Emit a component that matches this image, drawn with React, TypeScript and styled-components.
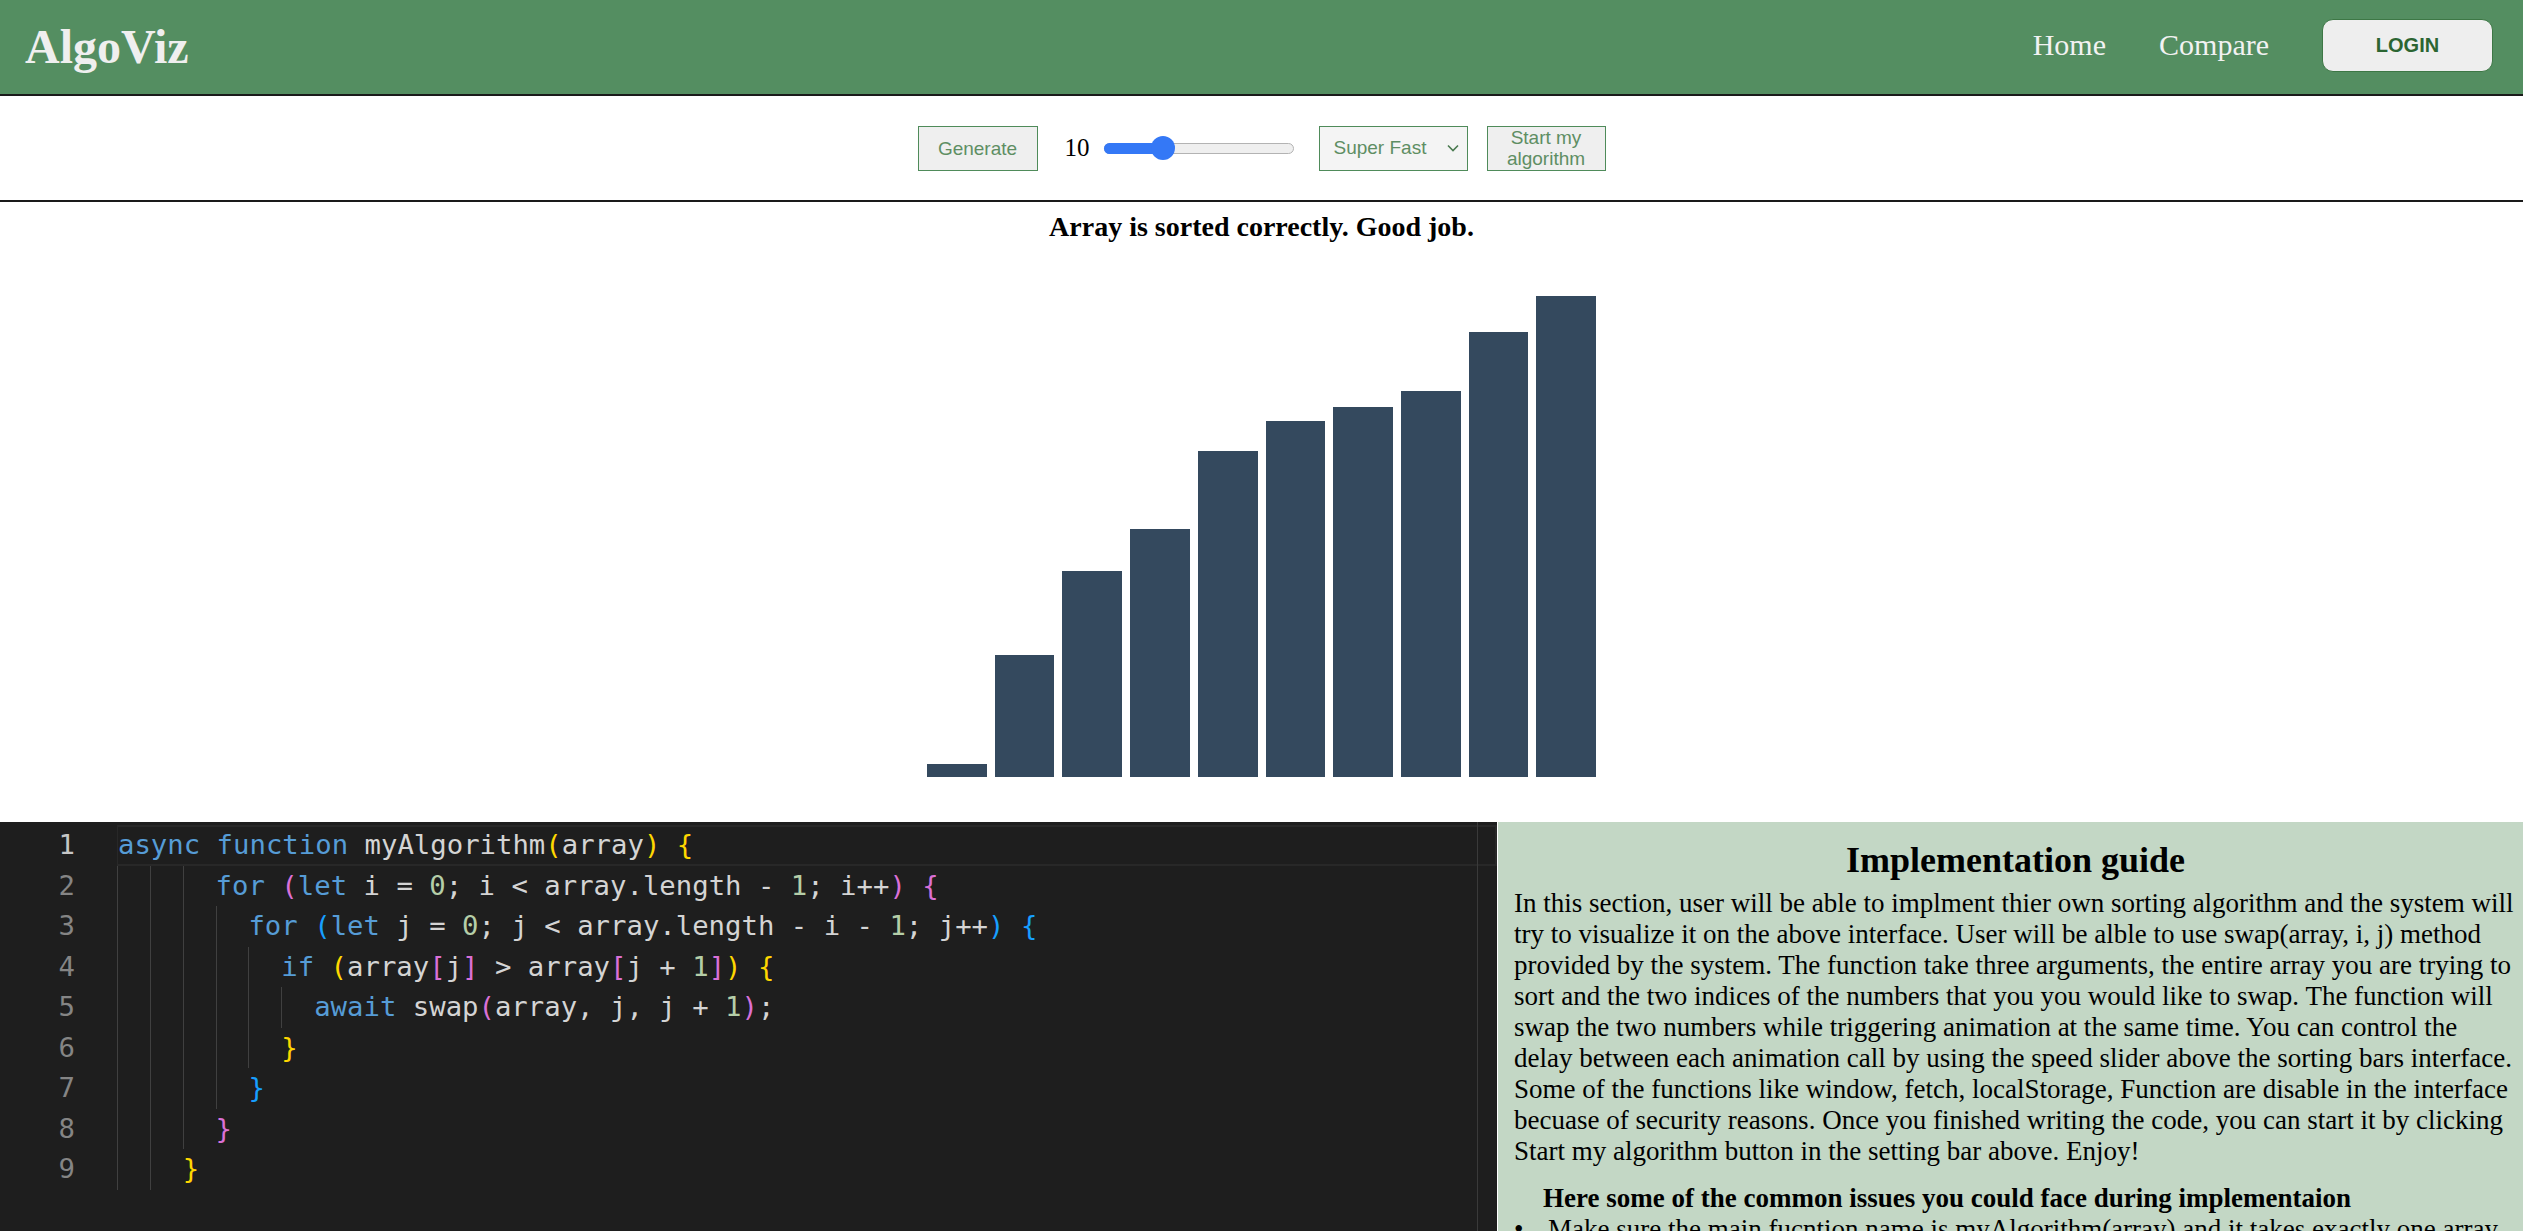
import React from "react";
import styled, { createGlobalStyle } from "styled-components";

const GlobalStyle = createGlobalStyle`
  html, body {
    margin: 0;
    padding: 0;
    background: #ffffff;
    font-family: "Liberation Serif", "Times New Roman", serif;
    color: #000;
  }
  * { box-sizing: border-box; }
`;

const Header = styled.header`
  display: flex;
  align-items: center;
  justify-content: space-between;
  height: 96px;
  padding: 0 30px 0 25px;
  background: #548e61;
  border-bottom: 2px solid #1a1a1a;
`;

const Logo = styled.div`
  font-family: "Liberation Serif", "Times New Roman", serif;
  font-weight: 700;
  font-size: 48px;
  color: #efefef;
  margin-top: -2px;
`;

const Nav = styled.nav`
  display: flex;
  align-items: center;
  gap: 53px;
`;

const NavLink = styled.a`
  font-family: "Liberation Serif", "Times New Roman", serif;
  font-size: 30px;
  color: #f2f2f2;
  text-decoration: none;
  margin-top: -4px;
`;

const LoginButton = styled.button`
  width: 171px;
  height: 53px;
  margin-top: -3px;
  border-radius: 11px;
  border: 1px solid #3d7745;
  background: #eeeeee;
  color: #2b6532;
  font-family: "Liberation Sans", Arial, sans-serif;
  font-weight: 700;
  font-size: 20px;
`;

const Toolbar = styled.div`
  display: flex;
  align-items: center;
  justify-content: center;
  height: 106px;
  border-bottom: 2px solid #1a1a1a;
`;

const ControlButton = styled.button<{ $width: number; $gap?: number }>`
  width: ${(p) => p.$width}px;
  height: 45px;
  margin-left: ${(p) => p.$gap ?? 0}px;
  padding: 0 4px;
  background: #efefef;
  border: 1px solid #4f8b5a;
  color: #5e8e63;
  font-family: "Liberation Sans", Arial, sans-serif;
  font-size: 19px;
  line-height: 21px;
`;

const SpeedValue = styled.span`
  margin-left: 27px;
  font-family: "Liberation Serif", "Times New Roman", serif;
  font-size: 25px;
  color: #000;
`;

const SliderTrack = styled.div`
  position: relative;
  width: 190px;
  height: 11px;
  margin-left: 14px;
  border-radius: 6px;
  background: #efefef;
  border: 1px solid #b3b3b3;
`;

const SliderFill = styled.div`
  margin: -1px 0 0 -1px;
  height: 11px;
  border-radius: 6px 0 0 6px;
  background: #3478f6;
`;

const SliderThumb = styled.div`
  position: absolute;
  top: 50%;
  width: 24px;
  height: 24px;
  margin: -12px 0 0 -12px;
  border-radius: 50%;
  background: #3478f6;
`;

const SpeedSelect = styled.div`
  display: flex;
  align-items: center;
  justify-content: space-between;
  width: 149px;
  height: 45px;
  margin-left: 25px;
  padding: 0 7px 0 14px;
  background: #f4f4f4;
  border: 1px solid #4f8b5a;
  color: #5e8e63;
  font-family: "Liberation Sans", Arial, sans-serif;
  font-size: 19px;
`;

const Chevron = styled.svg`
  width: 14px;
  height: 14px;
`;

const StatusTitle = styled.h3`
  margin: 9px 0 0;
  text-align: center;
  font-family: "Liberation Serif", "Times New Roman", serif;
  font-weight: 700;
  font-size: 28px;
  line-height: 32px;
`;

const BarsArea = styled.div`
  display: flex;
  align-items: flex-end;
  justify-content: center;
  gap: 8px;
  height: 534px;
  margin-bottom: 45px;
`;

const Bar = styled.div`
  width: 59.7px;
  background: #34495e;
`;

const Workspace = styled.div`
  display: grid;
  grid-template-columns: 1497px 1fr;
  column-gap: 1px;
  background: #ffffff;
`;

const Editor = styled.div`
  position: relative;
  min-height: 620px;
  padding-top: 3px;
  background: #1e1e1e;
  font-family: "DejaVu Sans Mono", "Liberation Mono", monospace;
  font-size: 27.3px;
`;

const ScrollRuler = styled.div`
  position: absolute;
  top: 0;
  bottom: 0;
  right: 19px;
  width: 1px;
  background: #3a3a3a;
`;

const CodeLine = styled.div`
  display: grid;
  grid-template-columns: 117px 1fr;
  height: 40.5px;
  line-height: 40.5px;
`;

const LineNumber = styled.span<{ $active: boolean }>`
  padding-right: 42px;
  text-align: right;
  color: ${(p) => (p.$active ? "#c6c6c6" : "#858585")};
`;

const CodeText = styled.span<{ $active: boolean }>`
  display: block;
  white-space: pre;
  color: #d4d4d4;
  border: 2px solid ${(p) => (p.$active ? "#282828" : "transparent")};
  border-left-width: ${(p) => (p.$active ? "1px" : "0")};
  line-height: 36.5px;
`;

const Indent = styled.span`
  display: inline-block;
  width: 2ch;
  height: 40.5px;
  margin-top: -2px;
  vertical-align: top;
  border-left: 1px solid #404040;
`;

const Token = styled.span<{ $color: string }>`
  color: ${(p) => p.$color};
`;

const GuidePanel = styled.section`
  padding: 20px 6px 0 16px;
  background: #c3d7c5;
`;

const GuideTitle = styled.h2`
  margin: 0 0 9.5px;
  text-align: center;
  font-size: 36px;
  line-height: 36px;
  font-weight: 700;
`;

const GuideText = styled.p`
  margin: 0;
  font-size: 27px;
  line-height: 31px;
`;

const IssuesTitle = styled.h4`
  margin: 16px 0 0;
  padding-left: 29px;
  font-size: 27px;
  line-height: 31px;
  font-weight: 700;
`;

const IssueList = styled.ul`
  margin: 0;
  padding: 0 0 40px;
  list-style: none;
`;

const IssueItem = styled.li`
  display: flex;
  font-size: 27px;
  line-height: 31px;
`;

const Bullet = styled.span`
  flex: 0 0 34px;
`;

const K = "#569cd6";
const D = "#d4d4d4";
const N = "#b5cea8";
const Y = "#ffd700";
const P = "#da70d6";
const B = "#179fff";

type Tok = [string, string];

const code: { indent: number; tokens: Tok[] }[] = [
  {
    indent: 0,
    tokens: [[K, "async"], [D, " "], [K, "function"], [D, " myAlgorithm"], [Y, "("], [D, "array"], [Y, ")"], [D, " "], [Y, "{"]],
  },
  {
    indent: 6,
    tokens: [[K, "for"], [D, " "], [P, "("], [K, "let"], [D, " i = "], [N, "0"], [D, "; i < array.length - "], [N, "1"], [D, "; i++"], [P, ")"], [D, " "], [P, "{"]],
  },
  {
    indent: 8,
    tokens: [[K, "for"], [D, " "], [B, "("], [K, "let"], [D, " j = "], [N, "0"], [D, "; j < array.length - i - "], [N, "1"], [D, "; j++"], [B, ")"], [D, " "], [B, "{"]],
  },
  {
    indent: 10,
    tokens: [[K, "if"], [D, " "], [Y, "("], [D, "array"], [P, "["], [D, "j"], [P, "]"], [D, " > array"], [P, "["], [D, "j + "], [N, "1"], [P, "]"], [Y, ")"], [D, " "], [Y, "{"]],
  },
  {
    indent: 12,
    tokens: [[K, "await"], [D, " swap"], [P, "("], [D, "array, j, j + "], [N, "1"], [P, ")"], [D, ";"]],
  },
  { indent: 10, tokens: [[Y, "}"]] },
  { indent: 8, tokens: [[B, "}"]] },
  { indent: 6, tokens: [[P, "}"]] },
  { indent: 4, tokens: [[Y, "}"]] },
];

const bars = [13, 122, 206, 248, 326, 356, 370, 386, 445, 481];

const sliderProgress = 0.283;

export default function App() {
  return (
    <>
      <GlobalStyle />
      <Header>
        <Logo>AlgoViz</Logo>
        <Nav>
          <NavLink href="#">Home</NavLink>
          <NavLink href="#">Compare</NavLink>
          <LoginButton>LOGIN</LoginButton>
        </Nav>
      </Header>

      <Toolbar>
        <ControlButton $width={120}>Generate</ControlButton>
        <SpeedValue>10</SpeedValue>
        <SliderTrack>
          <SliderFill style={{ width: `calc(12px + ${sliderProgress} * 166px)` }} />
          <SliderThumb style={{ left: `calc(12px + ${sliderProgress} * 166px)` }} />
        </SliderTrack>
        <SpeedSelect>
          <span>Super Fast</span>
          <Chevron viewBox="0 0 14 14">
            <path d="M2 4.5 L7 9.5 L12 4.5" fill="none" stroke="#4a7a50" strokeWidth="1.6" />
          </Chevron>
        </SpeedSelect>
        <ControlButton $width={119} $gap={19}>
          Start my algorithm
        </ControlButton>
      </Toolbar>

      <StatusTitle>Array is sorted correctly. Good job.</StatusTitle>
      <BarsArea>
        {bars.map((h, i) => (
          <Bar key={i} style={{ height: `${h}px` }} />
        ))}
      </BarsArea>

      <Workspace>
        <Editor>
          {code.map((line, i) => (
            <CodeLine key={i}>
              <LineNumber $active={i === 0}>{i + 1}</LineNumber>
              <CodeText $active={i === 0}>
                {Array.from({ length: line.indent / 2 }).map((_, j) => (
                  <Indent key={j} />
                ))}
                {line.tokens.map(([c, t], j) => (
                  <Token key={j} $color={c}>
                    {t}
                  </Token>
                ))}
              </CodeText>
            </CodeLine>
          ))}
          <ScrollRuler />
        </Editor>

        <GuidePanel>
          <GuideTitle>Implementation guide</GuideTitle>
          <GuideText>
            In this section, user will be able to implment thier own sorting algorithm and the system will try to
            visualize it on the above interface. User will be alble to use swap(array, i, j) method provided by the
            system. The function take three arguments, the entire array you are trying to sort and the two indices of
            the numbers that you you would like to swap. The function will swap the two numbers while triggering
            animation at the same time. You can control the delay between each animation call by using the speed slider
            above the sorting bars interface. Some of the functions like window, fetch, localStorage, Function are
            disable in the interface becuase of security reasons. Once you finished writing the code, you can start it
            by clicking Start my algorithm button in the setting bar above. Enjoy!
          </GuideText>
          <IssuesTitle>Here some of the common issues you could face during implementaion</IssuesTitle>
          <IssueList>
            <IssueItem>
              <Bullet>•</Bullet>
              <span>
                Make sure the main fucntion name is myAlgorithm(array) and it takes exactly one array argument which is
                the array to be sorted.
              </span>
            </IssueItem>
            <IssueItem>
              <Bullet>•</Bullet>
              <span>Make sure to use await before every swap call so the animation can be displayed properly.</span>
            </IssueItem>
          </IssueList>
        </GuidePanel>
      </Workspace>
    </>
  );
}
